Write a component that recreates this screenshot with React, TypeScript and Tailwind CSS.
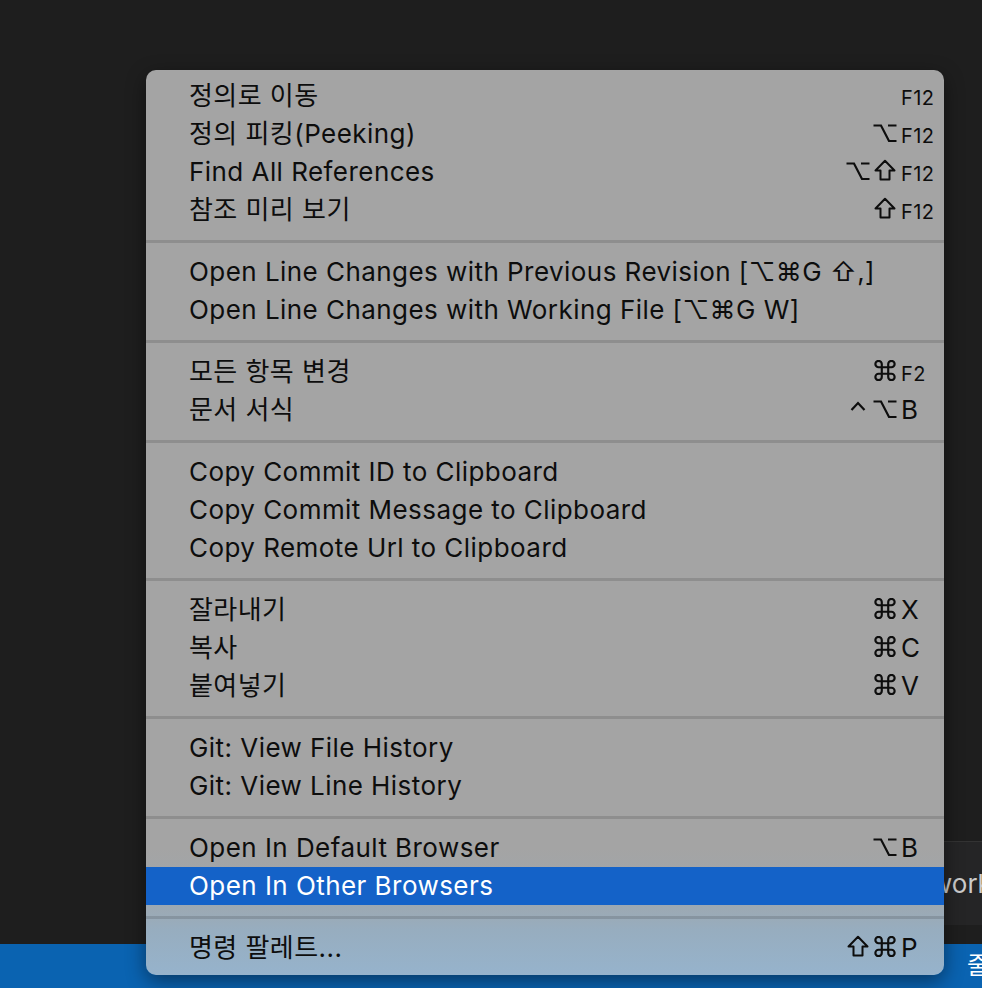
import React from 'react';

type Mod = 'cmd' | 'opt' | 'shift' | 'ctrl';

interface MenuItem {
  label: string;
  mods?: Mod[];
  keyName?: string;
  small?: boolean;
  active?: boolean;
}

const groups: MenuItem[][] = [
  [
    { label: '정의로 이동', keyName: 'F12', small: true },
    { label: '정의 피킹(Peeking)', mods: ['opt'], keyName: 'F12', small: true },
    { label: 'Find All References', mods: ['opt', 'shift'], keyName: 'F12', small: true },
    { label: '참조 미리 보기', mods: ['shift'], keyName: 'F12', small: true },
  ],
  [
    { label: 'Open Line Changes with Previous Revision [⌥⌘G ⇧,]' },
    { label: 'Open Line Changes with Working File [⌥⌘G W]' },
  ],
  [
    { label: '모든 항목 변경', mods: ['cmd'], keyName: 'F2', small: true },
    { label: '문서 서식', mods: ['ctrl', 'opt'], keyName: 'B' },
  ],
  [
    { label: 'Copy Commit ID to Clipboard' },
    { label: 'Copy Commit Message to Clipboard' },
    { label: 'Copy Remote Url to Clipboard' },
  ],
  [
    { label: '잘라내기', mods: ['cmd'], keyName: 'X' },
    { label: '복사', mods: ['cmd'], keyName: 'C' },
    { label: '붙여넣기', mods: ['cmd'], keyName: 'V' },
  ],
  [
    { label: 'Git: View File History' },
    { label: 'Git: View Line History' },
  ],
  [
    { label: 'Open In Default Browser', mods: ['opt'], keyName: 'B' },
    { label: 'Open In Other Browsers', active: true },
  ],
  [{ label: '명령 팔레트...', mods: ['shift', 'cmd'], keyName: 'P' }],
];

const ModIcon: React.FC<{ mod: Mod; color: string }> = ({ mod, color }) => {
  switch (mod) {
    case 'opt':
      return (
        <svg width="24" height="20" viewBox="0 0 24 20" fill="none" stroke={color} strokeWidth="2.2">
          <path d="M0.5 2.5h7.5l8 15.5h7.5M15 2.5h8.5" />
        </svg>
      );
    case 'shift':
      return (
        <svg width="22" height="22" viewBox="0 0 22 22" fill="none" stroke={color} strokeWidth="2" strokeLinejoin="round">
          <path d="M11 1.8 20.5 11.5h-5v9h-9v-9h-5z" />
        </svg>
      );
    case 'cmd':
      return (
        <svg width="22" height="21" viewBox="2.2 2.2 19.6 19.6" fill="none" stroke={color} strokeWidth="2">
          <path d="M15 6v12a3 3 0 1 0 3-3H6a3 3 0 1 0 3 3V6a3 3 0 1 0-3 3h12a3 3 0 1 0-3-3" />
        </svg>
      );
    case 'ctrl':
      return (
        <svg width="16" height="20" viewBox="0 0 16 20" fill="none" stroke={color} strokeWidth="2.2">
          <path d="M1.5 11 8 4l6.5 7" />
        </svg>
      );
    default:
      return null;
  }
};

const Row: React.FC<{ item: MenuItem }> = ({ item }) => {
  const color = item.active ? '#ffffff' : '#0d0d0d';
  return (
    <div
      className={`flex items-baseline h-[38px] leading-[38px] pl-[43px] whitespace-nowrap ${
        item.active ? 'bg-[#1462c8] text-white' : 'text-[#0d0d0d]'
      }`}
    >
      <span className="flex-1">{item.label}</span>
      {item.mods && (
        <span className="flex items-baseline justify-end mr-[3px]">
          {item.mods.map((m, i) => (
            <span key={i} className="w-[27px] flex justify-center items-baseline">
              <ModIcon mod={m} color={color} />
            </span>
          ))}
        </span>
      )}
      {item.keyName && (
        <span className={`w-[43px] text-left ${item.small ? 'text-[20px]' : 'text-[26px]'}`}>{item.keyName}</span>
      )}
    </div>
  );
};

const ContextMenu: React.FC = () => (
  <div className="absolute left-[146px] top-[70px] w-[798px] rounded-[10px] pt-[7px] pb-[8px] text-[26px] tracking-[0.45px] bg-[linear-gradient(to_bottom,#a4a4a4_0%,#a4a4a4_86%,#a0a6ab_91%,#97adbf_95%,#96b3cc_100%)] shadow-[0_6px_20px_rgba(0,0,0,0.45)] overflow-hidden">
    {groups.map((group, gi) => (
      <div key={gi}>
        {gi > 0 && (
          <div className="h-[24px] flex items-center">
            <div className="h-[3px] w-full bg-black/[0.13]" />
          </div>
        )}
        {group.map((item, ii) => (
          <Row key={ii} item={item} />
        ))}
      </div>
    ))}
  </div>
);

export default function App() {
  return (
    <div
      className="relative w-full h-screen overflow-hidden bg-[#1e1e1e] flex flex-col"
      style={{ fontFamily: 'Inter, "Noto Sans CJK KR", sans-serif' }}
    >
      <div className="flex-1" />
      <div className="h-[44px] bg-[#0a63b1] text-white text-[24px] leading-[44px] whitespace-nowrap overflow-hidden pl-[967px]">
        줄 12, 열 5
      </div>

      {/* hover tooltip behind the menu */}
      <div className="absolute left-[700px] top-[841px] w-[400px] h-[84px] bg-[#252526] border-t border-[#333333] text-[#cccccc] text-[26px] leading-[84px] whitespace-nowrap pl-[231px]">
        work
      </div>

      <ContextMenu />
    </div>
  );
}
